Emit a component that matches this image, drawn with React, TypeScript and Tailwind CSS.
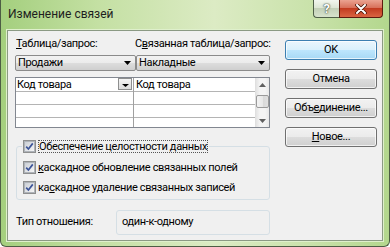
import React from "react";

const btnGray = "bg-[linear-gradient(#f2f2f2,#ebebeb_50%,#dddddd_50%,#cfcfcf)] border-[#707070]";
const btnBlue = "bg-[linear-gradient(#eaf6fd,#d9f0fc_50%,#bee6fd_50%,#a7d9f5)] border-[#3c7fb1]";

function DownArrow({ w = 7, h = 4 }: { w?: number; h?: number }) {
  return (
    <svg width={w} height={h} viewBox={`0 0 ${w} ${h}`}>
      <polygon points={`0,0 ${w},0 ${w / 2},${h}`} fill="#000" />
    </svg>
  );
}

function Combo({ text, className }: { text: string; className?: string }) {
  return (
    <div
      className={`flex h-[16px] items-center justify-between rounded-[2px] border border-[#8b8b8b] bg-[linear-gradient(#f2f2f2,#ebebeb_50%,#dddddd_50%,#cfcfcf)] pl-[2px] pr-[4px] ${className ?? ""}`}
    >
      <span className="leading-[14px]">{text}</span>
      <DownArrow />
    </div>
  );
}

function Check({ label }: { label: React.ReactNode }) {
  return (
    <div className="flex h-[13px] items-center whitespace-nowrap">
      <div className="flex h-[13px] w-[13px] shrink-0 items-center justify-center border border-[#8e8f8f] bg-[#f4f4f4]">
        <div className="flex h-[11px] w-[11px] items-center justify-center border border-[#aeb3b9] bg-[linear-gradient(135deg,#cbcfd5,#f6f6f6)]">
          <svg width="9" height="9" viewBox="0 0 9 9">
            <path d="M1.2 4.6 L3.4 7 L7.8 1.4" stroke="#3d5599" strokeWidth="1.7" fill="none" />
          </svg>
        </div>
      </div>
      <span className="ml-[2px] leading-[13px]">{label}</span>
    </div>
  );
}

function DialogButton({ children, primary }: { children: React.ReactNode; primary?: boolean }) {
  return (
    <button
      className={`flex h-[20px] w-[92px] items-center justify-center rounded-[3px] border shadow-[inset_0_0_0_1px_rgba(255,255,255,0.7)] ${primary ? btnBlue : btnGray}`}
    >
      {children}
    </button>
  );
}

export default function App() {
  return (
    <div
      className="flex h-[247px] w-[390px] flex-col overflow-hidden rounded-b-[6px] border-x border-b border-[#4d5d44] bg-[linear-gradient(90deg,#a4cf7e,#c4e0a3_25%,#dcebc4_55%,#c9e2aa_80%,#b3d78d)] text-[11px] tracking-[-0.35px] text-black"
      style={{ fontFamily: 'Roboto, "Noto Sans", "Liberation Sans", sans-serif' }}
    >
      {/* title bar */}
      <div className="flex h-[30px] shrink-0 items-start">
        <span className="flex-1 pl-[7px] pt-[6px] text-[12px] leading-[16px] tracking-normal text-[#1e1e1e]">
          Изменение связей
        </span>
        <div className="flex h-[18px] w-[26px] shrink-0 items-center justify-center rounded-bl-[4px] border border-r-0 border-t-0 border-[#4f5f48] bg-[linear-gradient(#f2f6ee,#dbe4d2_50%,#c3d0b8_50%,#d8e3cc)] text-[13px] font-bold leading-none text-white [text-shadow:0_0_2px_#2f3d2a,0_0_1px_#2f3d2a]">
          ?
        </div>
        <div className="mr-[6px] flex h-[18px] w-[44px] shrink-0 items-center justify-center rounded-br-[4px] border border-t-0 border-[#5e1a0e] bg-[#c9462c] bg-[linear-gradient(#eba391,#d66b55_50%,#c23b20_50%,#da6442)]">
          <svg width="12" height="10" viewBox="0 0 12 10">
            <path d="M2 1 L10 9 M10 1 L2 9" stroke="#4a1608" strokeWidth="3.6" strokeLinecap="round" />
            <path d="M2 1 L10 9 M10 1 L2 9" stroke="#fff" strokeWidth="2" strokeLinecap="round" />
          </svg>
        </div>
      </div>

      {/* client area */}
      <div className="mx-[6px] flex h-[211px] shrink-0 border border-[#8b9a84] bg-[#f0f0f0] shadow-[0_0_0_1px_#dff0cc]">
        <div className="ml-[7px] flex w-[255px] shrink-0 flex-col">
          <div className="mt-[5px] flex h-[15px] whitespace-nowrap leading-[15px]">
            <span className="w-[120px] shrink-0 pl-[1px]">
              <span className="underline">Т</span>аблица/запрос:
            </span>
            <span>
              С<span className="underline">в</span>язанная таблица/запрос:
            </span>
          </div>
          <div className="mt-[4px] flex">
            <Combo text="Продажи" className="w-[121px]" />
            <Combo text="Накладные" className="w-[134px]" />
          </div>

          {/* grid */}
          <div className="mt-[6px] flex h-[51px] border border-[#828790] bg-white">
            <div className="flex w-[118px] flex-col border-r border-[#a0a0a0]">
              <div className="flex h-[14px] items-start justify-between border-b border-[#b4b4b4] pl-[1px]">
                <span className="leading-[13px]">Код товара</span>
                <div className="mr-[1px] flex h-[12px] w-[14px] items-end justify-center border border-[#8e8f8f] bg-[linear-gradient(#f4f4f4,#dcdcdc)] pb-[2px]">
                  <DownArrow w={7} h={3} />
                </div>
              </div>
              <div className="h-[13px] border-b border-[#b4b4b4]" />
              <div className="h-[13px] border-b border-[#b4b4b4]" />
              <div className="flex-1" />
            </div>
            <div className="flex w-[121px] flex-col">
              <div className="h-[14px] border-b border-[#b4b4b4] pl-[2px] leading-[13px]">Код товара</div>
              <div className="h-[13px] border-b border-[#b4b4b4]" />
              <div className="h-[13px] border-b border-[#b4b4b4]" />
              <div className="flex-1" />
            </div>
            {/* scrollbar */}
            <div className="flex w-[14px] flex-col items-center border-l border-[#e0e0e0] bg-[linear-gradient(90deg,#e3e3e3,#f4f4f4_30%,#f4f4f4_70%,#e8e8e8)]">
              <div className="flex h-[14px] items-center justify-center">
                <svg width="7" height="4" viewBox="0 0 7 4">
                  <polygon points="0,4 7,4 3.5,0" fill="#606060" />
                </svg>
              </div>
              <div className="mt-[3px] h-[13px] w-[13px] rounded-[2px] border border-[#9a9a9a] bg-[linear-gradient(90deg,#f3f3f3,#e8e8e8_50%,#d8d8d8_50%,#e0e0e0)]" />
              <div className="flex-1" />
              <div className="flex h-[13px] items-center justify-center">
                <svg width="7" height="4" viewBox="0 0 7 4">
                  <polygon points="0,0 7,0 3.5,4" fill="#606060" />
                </svg>
              </div>
            </div>
          </div>

          {/* group box */}
          <fieldset className="ml-[1px] mt-[12px] h-[60px] w-[254px] rounded-[3px] border border-[#d5dfe5]">
            <legend className="ml-[5px] px-[1px]">
              <Check
                label={
                  <span className="px-[1px] outline-1 -outline-offset-1 outline-[#555] outline-dotted">
                    Обеспечение целостности данных
                  </span>
                }
              />
            </legend>
            <div className="mt-[8px] flex flex-col gap-[7px] pl-[6px]">
              <Check
                label={
                  <>
                    <span className="underline">к</span>аскадное обновление связанных полей
                  </>
                }
              />
              <Check
                label={
                  <>
                    ка<span className="underline">с</span>кадное удаление связанных записей
                  </>
                }
              />
            </div>
          </fieldset>

          <div className="mt-[10px] flex items-center">
            <span className="w-[101px] pl-[1px]">Тип отношения:</span>
            <div className="flex h-[25px] flex-1 items-center rounded-[3px] border border-[#d5dfe5] pl-[5px]">
              один-к-одному
            </div>
          </div>
        </div>

        {/* buttons */}
        <div className="ml-[15px] mt-[9px] flex flex-col gap-[9px]">
          <DialogButton primary>OK</DialogButton>
          <DialogButton>Отмена</DialogButton>
          <DialogButton>
            <span>
              Объ<span className="underline">е</span>динение...
            </span>
          </DialogButton>
          <DialogButton>
            <span>
              <span className="underline">Н</span>овое...
            </span>
          </DialogButton>
        </div>
      </div>
    </div>
  );
}
